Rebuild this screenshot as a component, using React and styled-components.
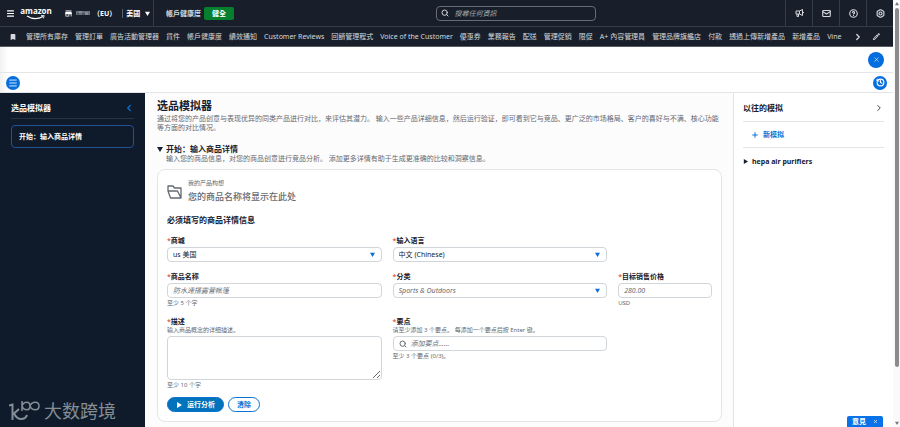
import React from 'react';
import styled, { createGlobalStyle, css } from 'styled-components';
import {
  Bolt,
  CircleHelp,
  History,
  Mail,
  Menu as MenuIcon,
  Plus,
  Search,
  X,
  ChevronLeft,
  ChevronRight,
} from 'lucide-react';
import { MdBookmark, MdOutlineEdit, MdStore } from 'react-icons/md';

const colors = {
  header: '#181f2a',
  headerLine: '#343c48',
  headerText: '#d5d9de',
  sidebar: '#0f1b2a',
  text: '#16202e',
  muted: '#65696f',
  line: '#e3e5e8',
  field: '#d1d6da',
  blue: '#0972d3',
  green: '#067f2f',
};

const GlobalStyle = createGlobalStyle`
  * {
    box-sizing: border-box;
  }

  body {
    margin: 0;
    background: #fff;
    color: ${colors.text};
    font-family: 'Noto Sans', 'Noto Sans CJK SC', sans-serif;
    font-size: 7px;
    line-height: 9px;
  }

  h1, h2, h3, p {
    margin: 0;
  }

  button, input, select, textarea {
    margin: 0;
    padding: 0;
    border: 0;
    background: none;
    color: inherit;
    font: inherit;
  }

  svg {
    display: block;
    flex: none;
  }

  a {
    color: inherit;
    text-decoration: none;
  }
`;

const Page = styled.div`
  display: flex;
  min-height: 100vh;
`;

const Shell = styled.div`
  position: relative;
  display: flex;
  flex: 1;
  flex-direction: column;
  min-width: 0;
`;

const Header = styled.header`
  background: ${colors.header};
  color: ${colors.headerText};
  font-family: 'Noto Sans', 'Noto Sans CJK TC', sans-serif;
`;

const TopBar = styled.div`
  display: flex;
  align-items: center;
  height: 27px;
  border-bottom: 1px solid ${colors.headerLine};
`;

const Account = styled.div`
  display: flex;
  align-items: center;
  align-self: stretch;
  width: 154px;
  padding-left: 6px;
  border-right: 1px solid ${colors.headerLine};
  color: #fff;
  font-weight: bold;
`;

const IconButton = styled.button`
  display: flex;
  align-items: center;
  justify-content: center;
  cursor: pointer;
`;

const Logo = styled.a`
  display: flex;
  flex-direction: column;
  align-items: center;
  width: 30px;
  margin: 0 13px 0 6px;
  font-family: 'Open Sans', sans-serif;
  font-size: 8px;
  line-height: 8px;
`;

const Shop = styled.button`
  display: flex;
  flex: 1;
  align-items: center;
  gap: 3px;
  white-space: nowrap;
`;

const Region = styled.span`
  display: flex;
  align-items: center;
  gap: 5px;
  margin-left: 3px;
  padding-left: 3px;
  border-left: 1px solid #59616c;
`;

const Health = styled.div`
  display: flex;
  flex: 1;
  align-items: center;
  gap: 3px;
  padding-left: 12px;
  font-weight: bold;
`;

const Badge = styled.span`
  padding: 2px 8px;
  border-radius: 2px;
  background: ${colors.green};
  color: #fff;
`;

const SearchBox = styled.label`
  display: flex;
  align-items: center;
  gap: 6px;
  width: 160px;
  height: 15px;
  margin-right: 28px;
  padding: 0 4px;
  border: 1px solid #656d77;
  border-radius: 4px;
`;

const PlainInput = styled.input`
  flex: 1;
  min-width: 0;
  outline: 0;

  &::placeholder {
    color: #a5abb3;
    font-style: italic;
  }
`;

const Tools = styled.div`
  display: flex;
  flex: 1;
  align-self: stretch;
  justify-content: flex-end;

  button {
    width: 27px;
    border-left: 1px solid ${colors.headerLine};
  }
`;

const Nav = styled.nav`
  display: flex;
  align-items: center;
  height: 20px;
  padding: 0 12px 0 9px;
  border-bottom: 1px solid #555d67;
  gap: 9px;
`;

const Links = styled.div`
  display: flex;
  flex: 1;
  gap: 7px;
  overflow: hidden;
  white-space: nowrap;
`;

const Strip = styled.div`
  display: flex;
  align-items: center;
  justify-content: ${({ $end }) => ($end ? 'flex-end' : 'space-between')};
  height: ${({ $end }) => ($end ? 26 : 20)}px;
  padding: ${({ $end }) => ($end ? '0 9px' : '0 6px')};
  border-bottom: 1px solid ${colors.line};
  background: linear-gradient(to right, #f1f1f1, #fff 8px);
`;

const Round = styled(IconButton)`
  width: ${({ $size }) => $size}px;
  height: ${({ $size }) => $size}px;
  border-radius: 50%;
  background: #056ede;
  color: #fff;
`;

const Body = styled.div`
  display: flex;
  flex: 1;
`;

const Sidebar = styled.aside`
  display: flex;
  flex-direction: column;
  width: 145px;
  padding: 8px 11px 6px;
  background: ${colors.sidebar};
  color: #fff;
`;

const PanelHead = styled.div`
  display: flex;
  align-items: center;
  justify-content: space-between;
  border-bottom: 1px solid ${({ $dark }) => ($dark ? '#273342' : colors.line)};
  padding-bottom: ${({ $dark }) => ($dark ? 3 : 6)}px;
`;

const PanelTitle = styled.h2`
  font-size: 8px;
  line-height: 14px;
`;

const Step = styled.a`
  margin-top: 6px;
  padding: 6px 7px;
  border: 1px solid #24509a;
  border-radius: 4px;
  font-weight: bold;
`;

const Watermark = styled.div`
  display: flex;
  align-items: center;
  gap: 3px;
  margin: auto -2px 0;
  color: #858d96;
  font-size: 18px;
  line-height: 20px;
  white-space: nowrap;
`;

const Main = styled.main`
  flex: 1;
  min-width: 0;
  padding: 5px 11px 5px 12px;
  background: #fcfcfd;
`;

const Title = styled.h1`
  font-size: 11px;
  line-height: 16px;
`;

const Text = styled.p`
  color: ${colors.muted};
`;

const Section = styled.section`
  margin-top: 12px;
`;

const SectionHead = styled.div`
  display: flex;
  align-items: flex-start;
  gap: 3px;
  margin-bottom: 6px;
`;

const Heading = styled.h3`
  font-size: 8px;
  line-height: 10px;
`;

const Toggle = styled(IconButton)`
  width: 6px;
  height: 10px;
`;

const Card = styled.form`
  padding: 9px;
  border: 1px solid ${colors.line};
  border-radius: 8px;
  background: #fff;
`;

const Concept = styled.div`
  display: flex;
  align-items: center;
  gap: 5px;
  margin-bottom: 11px;
  color: ${colors.muted};
`;

const Small = styled.span`
  display: block;
  color: ${colors.muted};
  font-size: 6px;
  line-height: 8px;
`;

const ConceptName = styled.strong`
  display: block;
  margin-top: 3px;
  font-size: 9px;
  font-weight: 500;
  line-height: 14px;
`;

const Fields = styled.div`
  display: grid;
  grid-template-columns: 16fr 16fr 7fr;
  gap: 10px 11px;
  margin-top: 11px;
`;

const Field = styled.div`
  min-width: 0;
  grid-column-start: ${({ $column }) => $column || 'auto'};
`;

const Label = styled.label`
  display: block;
  font-weight: bold;

  &::before {
    color: #d13212;
    font-weight: normal;
    content: '*';
  }
`;

const control = css`
  width: 100%;
  height: 15px;
  padding: 0 5px;
  border: 1px solid ${colors.field};
  border-radius: 4px;
  background: #fff;
`;

const Input = styled.input`
  ${control}
  display: block;
  margin: 2px 0 1px;

  &::placeholder {
    color: ${colors.muted};
    font-style: italic;
  }
`;

const SelectBox = styled.div`
  display: grid;
  align-items: center;
  margin-top: 2px;

  > * {
    grid-area: 1 / 1;
  }

  svg {
    justify-self: end;
    margin-right: 7px;
    color: ${colors.blue};
    pointer-events: none;
  }
`;

const SelectInput = styled.select`
  ${control}
  appearance: none;
  ${({ $empty }) =>
    $empty &&
    css`
      color: ${colors.muted};
      font-style: italic;
    `}
`;

const TextArea = styled.textarea`
  ${control}
  display: block;
  height: 44px;
  margin: 2px 0 1px;
  resize: vertical;
`;

const PointBox = styled.div`
  ${control}
  display: flex;
  align-items: center;
  gap: 4px;
  margin: 2px 0 1px;
  color: ${colors.muted};

  input::placeholder {
    color: ${colors.muted};
  }
`;

const Actions = styled.div`
  display: flex;
  gap: 4px;
  margin-top: 8px;
`;

const Button = styled.button`
  display: flex;
  align-items: center;
  gap: 5px;
  height: 15px;
  padding: 0 8px;
  border: 1px solid ${colors.blue};
  border-radius: 8px;
  background: ${({ $primary }) => ($primary ? '#0073bb' : '#fff')};
  color: ${({ $primary }) => ($primary ? '#fff' : colors.blue)};
  font-weight: bold;
`;

const Past = styled.aside`
  width: 160px;
  padding: 8px 9px;
  border-left: 1px solid ${colors.line};
`;

const NewRun = styled.button`
  display: flex;
  align-items: center;
  gap: 4px;
  width: 100%;
  height: 26px;
  padding-left: 8px;
  border-bottom: 1px solid ${colors.line};
  color: ${colors.blue};
  font-weight: bold;
`;

const Run = styled.button`
  display: flex;
  align-items: center;
  gap: 4px;
  height: 26px;
  font-weight: bold;
`;

const Feedback = styled.div`
  position: absolute;
  right: 10px;
  bottom: 0;
  display: flex;
  align-items: center;
  justify-content: space-between;
  width: 36px;
  height: 11px;
  padding: 0 5px;
  border-radius: 2px 2px 0 0;
  background: #0972e8;
  color: #fff;
  font-family: 'Noto Sans CJK TC', sans-serif;
  font-weight: bold;
`;

const ScrollTrack = styled.div`
  display: flex;
  flex-direction: column;
  align-items: center;
  width: 7px;
  padding: 2px 0;
  background: #fafafa;
  color: #777;
`;

const ScrollThumb = styled.div`
  width: 4px;
  height: 84vh;
  margin: 2px 0 auto;
  border-radius: 2px;
  background: #8b8b8b;
`;

const trianglePoints = {
  down: '0,1 6,1 3,6',
  up: '0,5 6,5 3,0',
  right: '1,0 6,3 1,6',
};

const Triangle = ({ to = 'down', size = 5 }) => (
  <svg width={size} height={size} viewBox="0 0 6 6" fill="currentColor">
    <polygon points={trianglePoints[to]} />
  </svg>
);

const Smile = () => (
  <svg width="22" height="5" viewBox="0 0 22 5" fill="none" stroke="#fff">
    <path d="M2 1Q10 6 18 1.5" strokeWidth="1.3" />
    <path d="M16 .7 19.2.6 18.4 3.4" strokeWidth=".9" />
  </svg>
);

const HiddenName = () => (
  <svg width="14" height="6" viewBox="0 0 14 6">
    <path d="M0 1h14v4H0z" fill="#69707b" />
    <path d="M3 1h3v2H3zM9 2h3v3H9z" fill="#858b94" />
    <path d="M1 3h2v2H1zM6 3h3v2H6z" fill="#4e5661" />
  </svg>
);

const Horn = () => (
  <svg
    width="9"
    height="8"
    viewBox="0 0 18 16"
    fill="none"
    stroke="currentColor"
    strokeWidth="2"
    strokeLinejoin="round"
  >
    <path d="M2 4h7l6-3v12l-6-3H2zM9 4v6M4 10v5h3v-5M15 7h3" />
  </svg>
);

const Folder = () => (
  <svg
    width="16"
    height="14"
    viewBox="0 0 16 14"
    fill="none"
    stroke="currentColor"
    strokeWidth="1.3"
    strokeLinejoin="round"
  >
    <path d="M3.500 13 1 6V1h5l1.500 2H14v10zM1 6h9.500L14 13" />
  </svg>
);

const WatermarkLogo = () => (
  <svg
    width="32"
    height="20"
    viewBox="0 0 32 20"
    fill="none"
    stroke="currentColor"
  >
    <path d="M0 4.500 3.500 3.500V19M10 8 5 12.500q3 6 8 5.500 4-.5 5-4" strokeWidth="2" />
    <path
      d="M13 0v10M13 5c2-5 8-5 8 0s-6 5-8 0M21 5c2-5 9-5 9 0s-7 5-9 0"
      strokeWidth="1.500"
    />
  </svg>
);

const links = [
  '管理所有庫存',
  '管理訂單',
  '廣告活動管理器',
  '貨件',
  '帳戶健康度',
  '績效通知',
  'Customer Reviews',
  '回饋管理程式',
  'Voice of the Customer',
  '優惠券',
  '業務報告',
  '配送',
  '管理促銷',
  '限促',
  'A+ 內容管理員',
  '管理品牌旗艦店',
  '付款',
  '透過上傳新增產品',
  '新增產品',
  'Vine',
];

const Select = ({ id, label, value, empty }) => (
  <Field>
    <Label htmlFor={id}>{label}</Label>
    <SelectBox>
      <SelectInput id={id} $empty={empty}>
        <option>{value}</option>
      </SelectInput>
      <Triangle />
    </SelectBox>
  </Field>
);

const SiteHeader = () => (
  <Header>
    <TopBar>
      <Account>
        <IconButton aria-label="選單">
          <MenuIcon size={9} strokeWidth={3} />
        </IconButton>
        <Logo href="#">
          amazon
          <Smile />
        </Logo>
        <Shop>
          <MdStore size={9} />
          <HiddenName />
          （EU）
          <Region>
            美國
            <Triangle />
          </Region>
        </Shop>
      </Account>
      <Health>
        帳戶健康度
        <Badge>健全</Badge>
      </Health>
      <SearchBox>
        <Search size={8} strokeWidth={3} />
        <PlainInput aria-label="搜尋" placeholder="搜尋任何資訊" />
      </SearchBox>
      <Tools>
        <IconButton aria-label="公告">
          <Horn />
        </IconButton>
        <IconButton aria-label="訊息">
          <Mail size={9} strokeWidth={3} />
        </IconButton>
        <IconButton aria-label="說明">
          <CircleHelp size={9} strokeWidth={3} />
        </IconButton>
        <IconButton aria-label="設定">
          <Bolt size={9} strokeWidth={3} />
        </IconButton>
      </Tools>
    </TopBar>
    <Nav>
      <MdBookmark size={8} />
      <Links>
        {links.map(link => (
          <a key={link} href="#">
            {link}
          </a>
        ))}
      </Links>
      <IconButton aria-label="更多">
        <ChevronRight size={10} strokeWidth={3} />
      </IconButton>
      <IconButton aria-label="編輯">
        <MdOutlineEdit size={9} />
      </IconButton>
    </Nav>
  </Header>
);

const ProductForm = () => (
  <Card>
    <Concept>
      <Folder />
      <div>
        <Small>我的产品构想</Small>
        <ConceptName>您的商品名称将显示在此处</ConceptName>
      </div>
    </Concept>
    <Heading>必须填写的商品详情信息</Heading>
    <Fields>
      <Select id="market" label="商城" value="us 美国" />
      <Select id="language" label="输入语言" value="中文 (Chinese)" />
      <Field $column={1}>
        <Label htmlFor="name">商品名称</Label>
        <Input id="name" placeholder="防水速搭露营帐篷" />
        <Small>至少 5 个字</Small>
      </Field>
      <Select id="category" label="分类" value="Sports & Outdoors" empty />
      <Field>
        <Label htmlFor="price">目标销售价格</Label>
        <Input id="price" placeholder="280.00" />
        <Small>USD</Small>
      </Field>
      <Field>
        <Label htmlFor="description">描述</Label>
        <Small>输入商品概念的详细描述。</Small>
        <TextArea id="description" />
        <Small>至少 10 个字</Small>
      </Field>
      <Field>
        <Label htmlFor="points">要点</Label>
        <Small>请至少添加 3 个要点。 每添加一个要点后按 Enter 键。</Small>
        <PointBox>
          <Search size={8} strokeWidth={3} />
          <PlainInput id="points" placeholder="添加要点……" />
        </PointBox>
        <Small>至少 3 个要点 (0/3)。</Small>
      </Field>
    </Fields>
    <Actions>
      <Button type="button" $primary>
        <Triangle to="right" size={6} />
        运行分析
      </Button>
      <Button type="reset">清除</Button>
    </Actions>
  </Card>
);

const App = () => (
  <Page>
    <GlobalStyle />
    <Shell>
      <SiteHeader />
      <Strip $end>
        <Round $size={16} aria-label="关闭">
          <X size={7} />
        </Round>
      </Strip>
      <Strip>
        <Round $size={14} aria-label="菜单">
          <MenuIcon size={10} />
        </Round>
        <Round $size={14} aria-label="历史">
          <History size={9} strokeWidth={3} />
        </Round>
      </Strip>
      <Body>
        <Sidebar>
          <PanelHead $dark>
            <PanelTitle>选品模拟器</PanelTitle>
            <IconButton aria-label="收起">
              <ChevronLeft size={10} color="#0972d3" strokeWidth={3} />
            </IconButton>
          </PanelHead>
          <Step href="#">开始：输入商品详情</Step>
          <Watermark>
            <WatermarkLogo />
            大数跨境
          </Watermark>
        </Sidebar>
        <Main>
          <Title>选品模拟器</Title>
          <Text>
            通过将您的产品创意与表现优异的同类产品进行对比，来评估其潜力。
            输入一些产品详细信息，然后运行验证，即可看到它与竞品、更广泛的市场格局、客户的喜好与不满、核心功能等方面的对比情况。
          </Text>
          <Section>
            <SectionHead>
              <Toggle aria-label="折叠">
                <Triangle size={6} />
              </Toggle>
              <div>
                <Heading>开始：输入商品详情</Heading>
                <Text>
                  输入您的商品信息，对您的商品创意进行竞品分析。
                  添加更多详情有助于生成更准确的比较和洞察信息。
                </Text>
              </div>
            </SectionHead>
            <ProductForm />
          </Section>
        </Main>
        <Past>
          <PanelHead>
            <PanelTitle>以往的模拟</PanelTitle>
            <IconButton aria-label="收起">
              <ChevronRight size={10} strokeWidth={2} />
            </IconButton>
          </PanelHead>
          <NewRun>
            <Plus size={8} strokeWidth={3} />
            新模拟
          </NewRun>
          <Run>
            <Triangle to="right" />
            hepa air purifiers
          </Run>
        </Past>
      </Body>
      <Feedback>
        意見
        <IconButton aria-label="關閉">
          <X size={5} strokeWidth={3} />
        </IconButton>
      </Feedback>
    </Shell>
    <ScrollTrack>
      <Triangle to="up" size={4} />
      <ScrollThumb />
      <Triangle size={4} />
    </ScrollTrack>
  </Page>
);

export default App;
